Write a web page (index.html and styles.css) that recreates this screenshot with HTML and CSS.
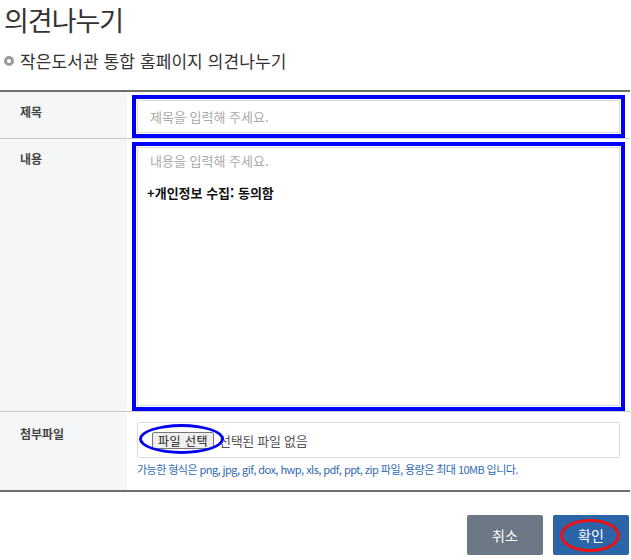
FILE: index.html
```html
<!DOCTYPE html>
<html lang="ko">
<head>
  <meta charset="UTF-8">
  <meta name="viewport" content="width=device-width, initial-scale=1.0">
  <title>의견나누기</title>
  <link rel="stylesheet" href="styles.css">
</head>
<body>
  <div class="page">
    <h1 class="page-title">의견나누기</h1>
    <h2 class="sub-title"><span class="bullet"></span>작은도서관 통합 홈페이지 의견나누기</h2>

    <div class="form-table">
      <div class="form-row">
        <div class="form-label">제목</div>
        <div class="form-cell">
          <div class="input-box marked">
            <span class="placeholder">제목을 입력해 주세요.</span>
          </div>
        </div>
      </div>

      <div class="form-row">
        <div class="form-label">내용</div>
        <div class="form-cell">
          <div class="text-box marked">
            <div class="placeholder">내용을 입력해 주세요.</div>
            <div class="agree">+개인정보 수집: 동의함</div>
          </div>
        </div>
      </div>

      <div class="form-row last">
        <div class="form-label">첨부파일</div>
        <div class="form-cell">
          <div class="file-box">
            <span class="file-btn">파일 선택</span>
            <span class="file-name">선택된 파일 없음</span>
            <span class="circle blue"></span>
          </div>
          <p class="help">가능한 형식은 png, jpg, gif, dox, hwp, xls, pdf, ppt, zip 파일, 용량은 최대 10MB 입니다.</p>
        </div>
      </div>
    </div>

    <div class="actions">
      <button class="btn cancel">취소</button>
      <button class="btn ok">확인<span class="circle red"></span></button>
    </div>
  </div>
</body>
</html>
```

FILE: styles.css
```css
/* Reset */
body, h1, h2, p {
  margin: 0;
  padding: 0;
}

body {
  font-family: "Noto Sans CJK KR", "Noto Sans", sans-serif;
  background-color: #fff;
  color: #333;
}

.page {
  width: 630px;
}

/* Titles */
.page-title {
  font-size: 27px;
  font-weight: 400;
  line-height: 32px;
  letter-spacing: -1px;
  color: #333;
  padding: 4px 0 0 4px;
}

.sub-title {
  display: flex;
  align-items: center;
  gap: 6px;
  font-size: 17px;
  font-weight: 400;
  line-height: 22px;
  letter-spacing: 0.1px;
  color: #333;
  margin: 14px 0 0 4px;
}

.bullet {
  width: 10px;
  height: 10px;
  box-sizing: border-box;
  border: 3px solid #9a9a9a;
  border-radius: 50%;
  background-color: #fff;
}

/* Form table */
.form-table {
  margin-top: 18px;
  border-top: 2px solid #6e6e6e;
  border-bottom: 2px solid #6e6e6e;
}

.form-row {
  display: grid;
  grid-template-columns: 127px 1fr;
  border-bottom: 1px solid #c9c9c9;
}

.form-row.last {
  border-bottom: none;
}

.form-label {
  background-color: #f5f6f7;
  font-size: 12px;
  font-weight: 700;
  line-height: 16px;
  color: #444;
  padding: 12px 0 0 20px;
}

.form-cell {
  padding: 8px 10px 5px 10px;
}

.marked {
  outline: 4px solid #0000ff;
  outline-offset: 1px;
}

.input-box {
  height: 33px;
  box-sizing: border-box;
  border: 1px solid #dcdcdc;
  padding: 0 12px;
  display: flex;
  align-items: center;
}

.placeholder {
  font-size: 13px;
  color: #aaa;
  line-height: 20px;
}

.text-box {
  height: 259px;
  box-sizing: border-box;
  border: 1px solid #dcdcdc;
  padding: 3px 12px 0 9px;
}

.text-box .placeholder {
  padding-left: 3px;
}

.agree {
  margin-top: 12px;
  font-size: 13px;
  font-weight: 700;
  line-height: 20px;
  color: #111;
}

/* File row */
.form-row.last .form-label {
  padding-top: 14px;
}

.form-row.last .form-cell {
  padding: 10px 10px 13px 10px;
}

.file-box {
  position: relative;
  height: 36px;
  box-sizing: border-box;
  border: 1px solid #dcdcdc;
  border-radius: 2px;
  display: flex;
  align-items: center;
  padding-left: 14px;
}

.file-btn {
  font-size: 12px;
  line-height: 15px;
  color: #222;
  background-color: #efefef;
  border: 1px solid #767676;
  border-radius: 2px;
  padding: 0 5px;
  letter-spacing: 0.5px;
}

.file-name {
  font-size: 13px;
  color: #555;
  margin-left: 5px;
  letter-spacing: -0.3px;
}

.help {
  margin-top: 3px;
  font-size: 11px;
  line-height: 16px;
  color: #2f6bb3;
  letter-spacing: -0.55px;
}

/* Marker circles */
.circle {
  position: absolute;
  border-radius: 50%;
  pointer-events: none;
}

.circle.blue {
  left: 1px;
  top: 1px;
  width: 79px;
  height: 24px;
  border: 3px solid #0000ee;
}

.circle.red {
  left: 7px;
  top: 4px;
  width: 54px;
  height: 27px;
  border: 3px solid #ee1111;
}

/* Buttons */
.actions {
  display: flex;
  justify-content: flex-end;
  gap: 10px;
  margin-top: 23px;
  padding-right: 1px;
}

.btn {
  position: relative;
  width: 76px;
  height: 40px;
  border: none;
  border-radius: 2px;
  font-family: inherit;
  font-size: 14px;
  color: #fff;
  cursor: pointer;
}

.btn.cancel {
  background-color: #6c7886;
}

.btn.ok {
  background-color: #2b64a7;
}
```
